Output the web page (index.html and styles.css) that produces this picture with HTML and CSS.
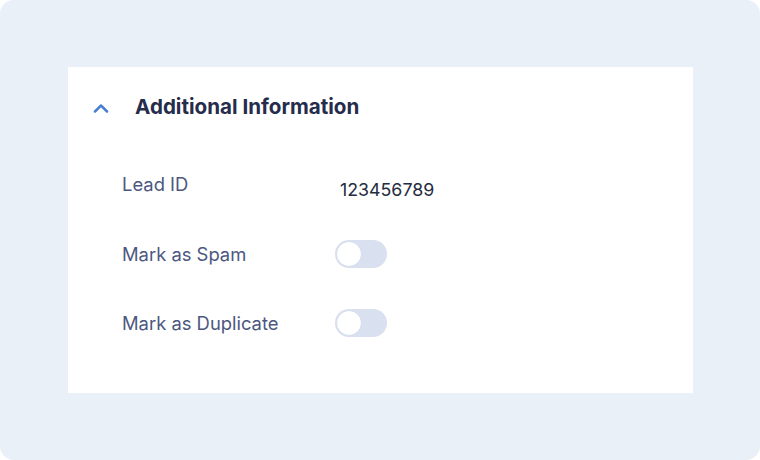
FILE: index.html
```html
<!DOCTYPE html>
<html>
<head>
<meta charset="utf-8">
<link rel="stylesheet" href="styles.css">
</head>
<body>
<div class="frame">
  <section class="card">
    <header class="head">
      <svg class="chev" width="16" height="10" viewBox="0 0 16 10"><path d="M2 8.5 L8 2.5 L14 8.5" fill="none" stroke="#4a7fd3" stroke-width="2.5" stroke-linecap="round" stroke-linejoin="round"/></svg>
      <h2 class="title">Additional Information</h2>
    </header>
    <div class="rows">
      <div class="row">
        <span class="label">Lead ID</span>
        <span class="value">123456789</span>
      </div>
      <div class="row">
        <span class="label">Mark as Spam</span>
        <span class="toggle"><span class="knob"></span></span>
      </div>
      <div class="row">
        <span class="label">Mark as Duplicate</span>
        <span class="toggle"><span class="knob"></span></span>
      </div>
    </div>
  </section>
</div>
</body>
</html>
```
FILE: styles.css
```css
html, body { margin: 0; padding: 0; background: #ffffff; }
body { width: 760px; height: 460px; font-family: Inter, "Noto Sans", sans-serif; }
.frame {
  width: 760px; height: 460px; box-sizing: border-box;
  background: #eaf0f8; border-radius: 14px;
  padding: 67px 67px 67px 68px;
}
.card {
  background: #ffffff; height: 326px; box-sizing: border-box;
}
.head { display: flex; align-items: center; height: 80px; padding-left: 25px; padding-bottom: 2px; box-sizing: border-box; }
.chev { display: block; margin-top: 3px; }
.title { margin: 0 0 0 26px; font-size: 20.6px; font-weight: 700; color: #262c4b; }
.rows { padding-left: 54px; display: flex; flex-direction: column; }
.row { display: flex; align-items: center; height: 69px; }
.row:first-child { align-items: flex-start; padding-top: 26px; box-sizing: border-box; height: 72px; }
.label { width: 213px; font-size: 18.4px; color: #4c587f; }
.value { font-size: 17.8px; color: #262c40; margin-top: 6px; margin-left: 5px; }
.toggle { width: 52px; height: 28px; border-radius: 14px; background: #d9e0f0; position: relative; box-sizing: border-box; }
.knob { position: absolute; left: 1px; top: 1px; width: 26px; height: 26px; border-radius: 50%; background: #fff; box-sizing: border-box; border: 1px solid #d5dcec; }
```
